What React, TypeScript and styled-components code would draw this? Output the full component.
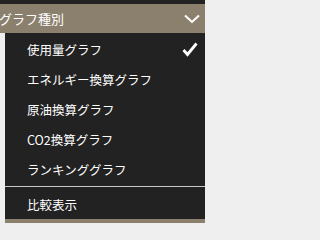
import React from "react";
import styled, { createGlobalStyle } from "styled-components";

const GlobalStyle = createGlobalStyle`
  html, body {
    margin: 0;
    padding: 0;
    background: #efefef;
  }
  body {
    font-family: "Noto Sans CJK JP", "Noto Sans", sans-serif;
  }
`;

const Wrapper = styled.div`
  width: 205px;
  height: 223px;
  display: flex;
  flex-direction: column;
  overflow: hidden;
`;

const TopStrip = styled.div`
  height: 4px;
  background: #222222;
`;

const Header = styled.div`
  height: 29px;
  background: #8b806d;
  display: flex;
  align-items: center;
  justify-content: space-between;
  padding: 0 5px 0 0;
  color: #ffffff;
  font-size: 13px;
  line-height: 1;
`;

const HeaderTitle = styled.span`
  margin-left: -1px;
`;

const Menu = styled.ul`
  list-style: none;
  margin: 0 0 0 5px;
  padding: 1px 0 0;
  background: #222222;
  flex: 1;
`;

const Item = styled.li`
  height: 30px;
  display: flex;
  align-items: center;
  justify-content: space-between;
  padding: 0 7px 0 22px;
  color: #ffffff;
  font-size: 12.5px;
`;

const Divider = styled.li`
  height: 1px;
  margin: 2px 0;
  background: #c8c8c8;
`;

const BottomStrip = styled.div`
  height: 4px;
  margin-left: 5px;
  background: #8b806d;
`;

const Chevron = () => (
  <svg width="16" height="10" viewBox="0 0 16 10">
    <polyline
      points="1,1.5 8,8 15,1.5"
      fill="none"
      stroke="#ffffff"
      strokeWidth="2"
    />
  </svg>
);

const Check = () => (
  <svg width="16" height="15" viewBox="0 0 16 15">
    <polyline
      points="1.5,8 5.5,12.5 14.5,1.5"
      fill="none"
      stroke="#ffffff"
      strokeWidth="2.8"
    />
  </svg>
);

const items = [
  { label: "使用量グラフ", checked: true },
  { label: "エネルギー換算グラフ" },
  { label: "原油換算グラフ" },
  { label: "CO2換算グラフ" },
  { label: "ランキンググラフ" },
];

export default function App() {
  return (
    <>
      <GlobalStyle />
      <Wrapper>
        <TopStrip />
        <Header>
          <HeaderTitle>グラフ種別</HeaderTitle>
          <Chevron />
        </Header>
        <Menu>
          {items.map((it) => (
            <Item key={it.label}>
              <span>{it.label}</span>
              {it.checked && <Check />}
            </Item>
          ))}
          <Divider />
          <Item>
            <span>比較表示</span>
          </Item>
        </Menu>
        <BottomStrip />
      </Wrapper>
    </>
  );
}
